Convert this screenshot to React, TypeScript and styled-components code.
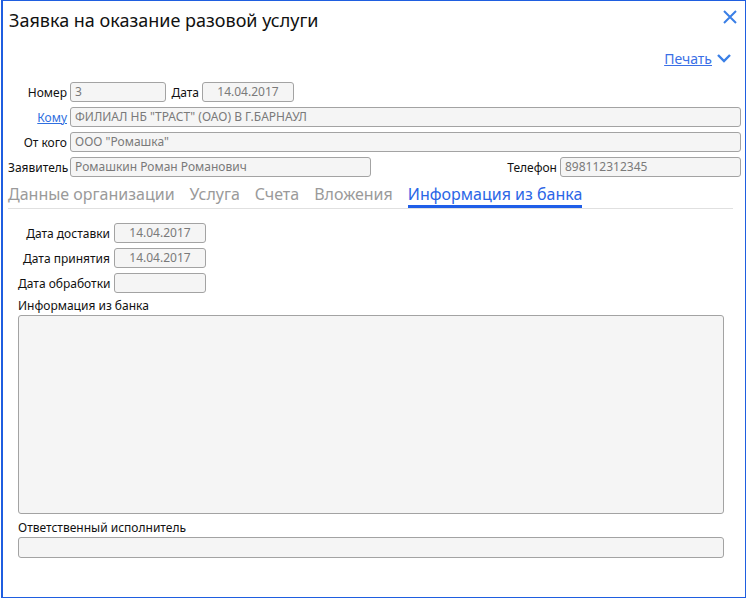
import styled, { createGlobalStyle } from 'styled-components';

const GlobalStyle = createGlobalStyle`
  html, body {
    margin: 0;
    padding: 0;
    background: #ffffff;
  }
  body {
    font-family: 'Noto Sans', 'Open Sans', sans-serif;
  }
`;

const TABS = ['Данные организации', 'Услуга', 'Счета', 'Вложения', 'Информация из банка'];
const ACTIVE_TAB = 4;

const App = () => {
  return (
    <>
      <GlobalStyle />
      <Dialog>
        <Header>
          <Title>Заявка на оказание разовой услуги</Title>
          <CloseButton aria-label='Закрыть'>
            <svg width='16' height='16' viewBox='0 0 16 16'>
              <path d='M2 2 L14 14 M14 2 L2 14' stroke='#3a7fe6' strokeWidth='2' fill='none' />
            </svg>
          </CloseButton>
        </Header>
        <PrintRow>
          <PrintLink href='#'>Печать</PrintLink>
          <svg width='16' height='10' viewBox='0 0 16 10'>
            <path d='M2 2 L8 8 L14 2' stroke='#3a7fe6' strokeWidth='2.4' fill='none' />
          </svg>
        </PrintRow>

        <TopForm>
          <Row>
            <Label>Номер</Label>
            <Field $width={96}>3</Field>
            <Label $width={30}>Дата</Label>
            <Field $width={92} $center>14.04.2017</Field>
          </Row>
          <Row>
            <Label><LabelLink href='#'>Кому</LabelLink></Label>
            <Field $grow>ФИЛИАЛ НБ "ТРАСТ" (ОАО) В Г.БАРНАУЛ</Field>
          </Row>
          <Row>
            <Label>От кого</Label>
            <Field $grow>ООО "Ромашка"</Field>
          </Row>
          <Row>
            <Label>Заявитель</Label>
            <Field $width={301}>Ромашкин Роман Романович</Field>
            <Spacer />
            <Label $width={70}>Телефон</Label>
            <Field $width={181}>898112312345</Field>
          </Row>
        </TopForm>

        <Tabs>
          {TABS.map((tab, i) => (
            <Tab key={tab} $active={i === ACTIVE_TAB}>{tab}</Tab>
          ))}
        </Tabs>

        <Panel>
          <DateRow>
            <PanelLabel>Дата доставки</PanelLabel>
            <Field $width={92} $center>14.04.2017</Field>
          </DateRow>
          <DateRow>
            <PanelLabel>Дата принятия</PanelLabel>
            <Field $width={92} $center>14.04.2017</Field>
          </DateRow>
          <DateRow>
            <PanelLabel>Дата обработки</PanelLabel>
            <Field $width={92} $center></Field>
          </DateRow>
          <BlockLabel>Информация из банка</BlockLabel>
          <TextArea />
          <BlockLabel>Ответственный исполнитель</BlockLabel>
          <WideField />
        </Panel>
      </Dialog>
    </>
  );
};

export default App;

const Dialog = styled.div`
  box-sizing: border-box;
  width: 745px;
  height: 598px;
  margin-left: 1px;
  border: 1px solid #1f5ee0;
  border-left-width: 2px;
  background: #ffffff;
  display: flex;
  flex-direction: column;
  color: #1a1a1a;
`;

const Header = styled.div`
  display: flex;
  justify-content: space-between;
  align-items: flex-start;
  padding: 6px 7px 0 6px;
  height: 34px;
`;

const Title = styled.div`
  font-size: 18px;
  line-height: 26px;
  color: #111111;
`;

const CloseButton = styled.button`
  border: none;
  background: none;
  padding: 0;
  margin-top: 2px;
  cursor: pointer;
  width: 16px;
  height: 16px;
`;

const PrintRow = styled.div`
  display: flex;
  justify-content: flex-end;
  align-items: center;
  gap: 4px;
  padding-right: 13px;
  margin-top: 7px;
  height: 20px;
`;

const PrintLink = styled.a`
  color: #3a6fe6;
  font-size: 14px;
  text-decoration: underline;
`;

const TopForm = styled.div`
  display: flex;
  flex-direction: column;
  gap: 5px;
  padding: 0 4px 0 5px;
  margin-top: 14px;
`;

const Row = styled.div`
  display: flex;
  align-items: center;
  gap: 3px;
`;

const Spacer = styled.div`
  flex: 1;
`;

const Label = styled.div<{ $width?: number }>`
  width: ${p => p.$width ?? 59}px;
  flex-shrink: 0;
  text-align: right;
  font-size: 12px;
  color: #111111;
  white-space: nowrap;
`;

const LabelLink = styled.a`
  color: #2f6fe0;
  text-decoration: underline;
`;

const Field = styled.div<{ $width?: number; $grow?: boolean; $center?: boolean }>`
  box-sizing: border-box;
  height: 20px;
  ${p => (p.$grow ? 'flex: 1;' : `width: ${p.$width}px; flex-shrink: 0;`)}
  border: 1px solid #a3a3a3;
  border-radius: 3px;
  background: #f5f5f5;
  color: #7a7a7a;
  font-size: 12px;
  line-height: 18px;
  padding: 0 4px;
  text-align: ${p => (p.$center ? 'center' : 'left')};
  white-space: nowrap;
  overflow: hidden;
`;

const WideField = styled.div`
  box-sizing: border-box;
  height: 21px;
  border: 1px solid #a3a3a3;
  border-radius: 3px;
  background: #f5f5f5;
`;

const Tabs = styled.div`
  display: flex;
  gap: 15px;
  margin: 6px 12px 0 5px;
  border-bottom: 1px solid #e0e0e0;
  height: 25px;
`;

const Tab = styled.div<{ $active?: boolean }>`
  font-size: 16px;
  line-height: 21px;
  padding-top: 1px;
  color: ${p => (p.$active ? '#2b66e6' : '#9a9a9a')};
  border-bottom: 3px solid ${p => (p.$active ? '#1f5ee8' : 'transparent')};
  white-space: nowrap;
`;

const Panel = styled.div`
  display: flex;
  flex-direction: column;
  padding: 14px 21px 0 15px;
`;

const DateRow = styled.div`
  display: flex;
  align-items: center;
  gap: 4px;
  margin-bottom: 5px;
`;

const PanelLabel = styled.div`
  width: 92px;
  text-align: right;
  font-size: 12px;
  color: #111111;
  white-space: nowrap;
`;

const BlockLabel = styled.div`
  font-size: 12px;
  line-height: 16px;
  color: #111111;
  margin-bottom: 1px;
`;

const TextArea = styled.div`
  box-sizing: border-box;
  height: 199px;
  border: 1px solid #a3a3a3;
  border-radius: 3px;
  background: #f5f5f5;
  margin-bottom: 6px;
`;
